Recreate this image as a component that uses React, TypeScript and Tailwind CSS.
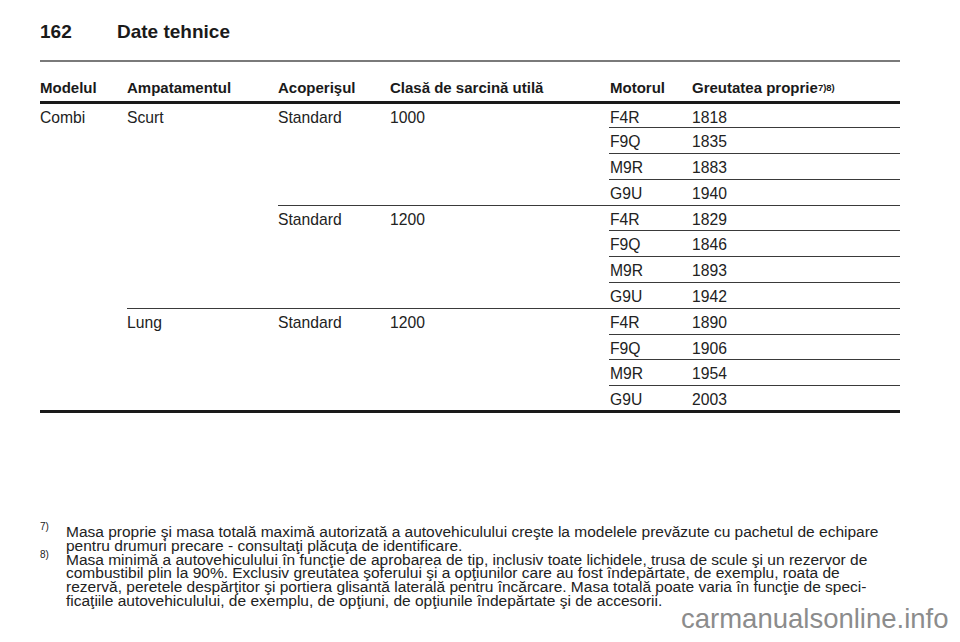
import React from 'react';

type Engine = { motor: string; mass: string };
type Group = { roof: string; load: string; engines: Engine[] };
type Base = { name: string; groups: Group[] };

const bases: Base[] = [
  {
    name: 'Scurt',
    groups: [
      {
        roof: 'Standard',
        load: '1000',
        engines: [
          { motor: 'F4R', mass: '1818' },
          { motor: 'F9Q', mass: '1835' },
          { motor: 'M9R', mass: '1883' },
          { motor: 'G9U', mass: '1940' },
        ],
      },
      {
        roof: 'Standard',
        load: '1200',
        engines: [
          { motor: 'F4R', mass: '1829' },
          { motor: 'F9Q', mass: '1846' },
          { motor: 'M9R', mass: '1893' },
          { motor: 'G9U', mass: '1942' },
        ],
      },
    ],
  },
  {
    name: 'Lung',
    groups: [
      {
        roof: 'Standard',
        load: '1200',
        engines: [
          { motor: 'F4R', mass: '1890' },
          { motor: 'F9Q', mass: '1906' },
          { motor: 'M9R', mass: '1954' },
          { motor: 'G9U', mass: '2003' },
        ],
      },
    ],
  },
];

const headers = [
  { label: 'Modelul', w: 'w-[87px]' },
  { label: 'Ampatamentul', w: 'w-[151px]' },
  { label: 'Acoperişul', w: 'w-[112px]' },
  { label: 'Clasă de sarcină utilă', w: 'w-[219px]' },
  { label: 'Motorul', w: 'w-[83px]' },
];

export default function App() {
  const rows: React.ReactNode[] = [];
  const total = bases.reduce((n, b) => n + b.groups.length * 4, 0);

  bases.forEach((base, bi) => {
    const lastBase = bi === bases.length - 1;
    base.groups.forEach((group, gi) => {
      const lastGroup = lastBase && gi === base.groups.length - 1;
      group.engines.forEach((eng, ei) => {
        const lastRow = lastGroup && ei === group.engines.length - 1;
        const line = lastRow ? '' : 'border-b border-[#3a3a3a]';
        rows.push(
          <tr key={`${bi}-${gi}-${ei}`} className="h-[25.8px]">
            {bi === 0 && gi === 0 && ei === 0 && (
              <td rowSpan={total} className="align-top pt-[5px]">
                Combi
              </td>
            )}
            {gi === 0 && ei === 0 && (
              <td
                rowSpan={base.groups.length * 4}
                className={`align-top pt-[5px] ${lastBase ? '' : 'border-b border-[#3a3a3a]'}`}
              >
                {base.name}
              </td>
            )}
            {ei === 0 && (
              <>
                <td rowSpan={4} className={`align-top pt-[5px] ${lastGroup ? '' : 'border-b border-[#3a3a3a]'}`}>
                  {group.roof}
                </td>
                <td rowSpan={4} className={`align-top pt-[5px] ${lastGroup ? '' : 'border-b border-[#3a3a3a]'}`}>
                  {group.load}
                </td>
              </>
            )}
            <td className={`align-top pt-[5px] pl-[1px] ${line}`}>{eng.motor}</td>
            <td className={`align-top pt-[5px] ${line}`}>{eng.mass}</td>
          </tr>
        );
      });
    });
  });

  return (
    <div className="relative w-[960px] h-[642px] bg-white text-[#222] font-['Liberation_Sans',Arial,sans-serif] overflow-hidden">
      <div className="flex pl-10 pt-[20px] text-[19px] font-bold leading-[24px] text-[#1a1a1a]">
        <span className="w-[77px]">162</span>
        <span>Date tehnice</span>
      </div>

      <div className="ml-10 w-[860px] mt-[16px] h-[2px] bg-[#7a7a7a]" />

      <table className="ml-10 mt-[14px] w-[860px] border-collapse table-fixed text-left text-[15.7px] leading-[18px]">
        <thead>
          <tr className="h-[26px]">
            {headers.map((h) => (
              <th key={h.label} className={`${h.w} align-bottom pb-[4px] font-bold text-[15px] text-[#1a1a1a] ${h.label === 'Motorul' ? 'pl-[1px]' : ''}`}>
                {h.label}
              </th>
            ))}
            <th className="align-bottom pb-[4px] font-bold text-[15px] text-[#1a1a1a]">
              Greutatea proprie
              <sup className="text-[9.5px] relative -top-[2px]">7)8)</sup>
            </th>
          </tr>
        </thead>
        <tbody className="border-t-[3px] border-b-[3px] border-[#1a1a1a]">{rows}</tbody>
      </table>

      <div className="ml-10 mt-[112px] w-[870px] text-[15.5px] leading-[13.8px]">
        <div className="flex">
          <span className="w-[26px] shrink-0 text-[10px] leading-[10px] -mt-[3px]">7)</span>
          <div>
            <div className="whitespace-nowrap">
              Masa proprie şi masa totală maximă autorizată a autovehiculului creşte la modelele prevăzute cu pachetul de echipare
            </div>
            <div className="whitespace-nowrap">pentru drumuri precare - consultaţi plăcuţa de identificare.</div>
          </div>
        </div>
        <div className="flex">
          <span className="w-[26px] shrink-0 text-[10px] leading-[10px] -mt-[3px]">8)</span>
          <div>
            <div className="whitespace-nowrap">
              Masa minimă a autovehiculului în funcţie de aprobarea de tip, inclusiv toate lichidele, trusa de scule şi un rezervor de
            </div>
            <div className="whitespace-nowrap">
              combustibil plin la 90%. Exclusiv greutatea şoferului şi a opţiunilor care au fost îndepărtate, de exemplu, roata de
            </div>
            <div className="whitespace-nowrap">
              rezervă, peretele despărţitor şi portiera glisantă laterală pentru încărcare. Masa totală poate varia în funcţie de speci-
            </div>
            <div className="whitespace-nowrap">
              ficaţiile autovehiculului, de exemplu, de opţiuni, de opţiunile îndepărtate şi de accesorii.
            </div>
          </div>
        </div>
      </div>

      <div className="absolute left-[681px] top-[603px] text-[27.5px] leading-[32px] text-[#8c8c8c]">
        carmanualsonline.info
      </div>
    </div>
  );
}
